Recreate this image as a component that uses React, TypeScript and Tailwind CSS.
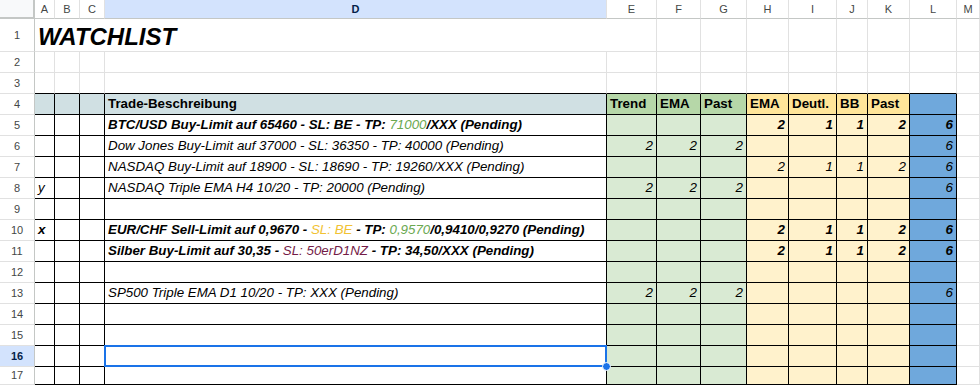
import type { ReactNode } from 'react'

const letters = ['A', 'B', 'C', 'D', 'E', 'F', 'G', 'H', 'I', 'J', 'K', 'L', 'M']

type Part = { t: string; c?: 'green' | 'orange' | 'maroon'; normal?: boolean }

type Row = {
  a?: string
  aBold?: boolean
  d?: Part[]
  bold?: boolean
  green?: (number | null)[]
  yellow?: (number | null)[]
  total?: number | null
}

// rows 5..17
const rows: Row[] = [
  {
    d: [
      { t: 'BTC/USD Buy-Limit auf 65460 - SL: BE - TP: ' },
      { t: '71000', c: 'green', normal: true },
      { t: '/XXX (Pending)' },
    ],
    bold: true,
    yellow: [2, 1, 1, 2],
    total: 6,
  },
  { d: [{ t: 'Dow Jones Buy-Limit auf 37000 - SL: 36350 - TP: 40000 (Pending)' }], green: [2, 2, 2], total: 6 },
  { d: [{ t: 'NASDAQ Buy-Limit auf 18900 - SL: 18690 - TP: 19260/XXX (Pending)' }], yellow: [2, 1, 1, 2], total: 6 },
  { a: 'y', d: [{ t: 'NASDAQ Triple EMA H4 10/20 - TP: 20000 (Pending)' }], green: [2, 2, 2], total: 6 },
  {},
  {
    a: 'x',
    aBold: true,
    d: [
      { t: 'EUR/CHF Sell-Limit auf 0,9670 - ' },
      { t: 'SL: BE', c: 'orange', normal: true },
      { t: ' - TP: ' },
      { t: '0,9570', c: 'green', normal: true },
      { t: '/0,9410/0,9270 (Pending)' },
    ],
    bold: true,
    yellow: [2, 1, 1, 2],
    total: 6,
  },
  {
    d: [
      { t: 'Silber Buy-Limit auf 30,35 - ' },
      { t: 'SL: 50erD1NZ', c: 'maroon', normal: true },
      { t: ' - TP: 34,50/XXX (Pending)' },
    ],
    bold: true,
    yellow: [2, 1, 1, 2],
    total: 6,
  },
  {},
  { d: [{ t: 'SP500 Triple EMA D1 10/20 - TP: XXX (Pending)' }], green: [2, 2, 2], total: 6 },
  {},
  {},
  {},
  {},
]

const partColor = {
  green: 'text-[#6aa84f]',
  orange: 'text-[#f1c232]',
  maroon: 'text-[#741b47]',
}

function Cell({ className = '', children }: { className?: string; children?: ReactNode }) {
  return <div className={`relative flex items-end overflow-hidden whitespace-nowrap border-r border-b ${className}`}>{children}</div>
}

function RowHead({ n, selected }: { n: number; selected?: boolean }) {
  return (
    <div
      className={`flex items-center justify-center border-r border-b border-r-[#c4c7c5] border-b-[#e1e1e1] text-[11px] ${
        selected ? 'bg-[#d3e3fd] font-bold text-[#041e49]' : 'bg-white text-[#444746]'
      }`}
    >
      {n}
    </div>
  )
}

function Num({ v, bold }: { v?: number | null; bold?: boolean }) {
  if (v == null) return null
  return <span className={`w-full pr-[3px] text-right italic ${bold ? 'font-bold' : ''}`}>{v}</span>
}

export default function App() {
  return (
    <div className="h-[385px] w-[980px] overflow-hidden bg-white font-['Liberation_Sans',Arial,sans-serif] text-[13.33px] text-black">
      <div className="grid grid-cols-[35px_20px_25px_25px_502px_50px_44px_46px_42px_48px_31px_42px_47px_1fr] grid-rows-[19px_33px_repeat(15,21px)]">
        {/* column headers */}
        <div className="border-r-2 border-b-2 border-[#c4c7c5] bg-[#f8f9fa]" />
        {letters.map((l) => (
          <div
            key={l}
            className={`flex items-center justify-center border-r border-b border-r-[#e1e1e1] border-b-[#c4c7c5] text-[11px] ${
              l === 'D' ? 'bg-[#d3e3fd] font-bold text-[#041e49]' : 'bg-white text-[#444746]'
            }`}
          >
            {l}
          </div>
        ))}

        {/* row 1 */}
        <RowHead n={1} />
        <Cell className="col-span-5 border-[#e1e1e1]">
          <span className="pl-[3px] text-[24px] leading-[28px] font-bold italic">WATCHLIST</span>
        </Cell>
        {letters.slice(5).map((l) => (
          <Cell key={l} className="border-[#e1e1e1]" />
        ))}

        {/* rows 2-3 */}
        {[2, 3].map((n) => (
          <div key={n} className="contents">
            <RowHead n={n} />
            {letters.map((l, i) => (
              <Cell
                key={l}
                className={`border-r-[#e1e1e1] ${n === 3 && i < 12 ? 'border-b-black' : 'border-b-[#e1e1e1]'}`}
              />
            ))}
          </div>
        ))}

        {/* row 4 header */}
        <RowHead n={4} />
        <Cell className="border-black bg-[#d0e0e3]" />
        <Cell className="border-black bg-[#d0e0e3]" />
        <Cell className="border-black bg-[#d0e0e3]" />
        <Cell className="border-black bg-[#d0e0e3] font-bold">
          <span className="pl-[3px]">Trade-Beschreibung</span>
        </Cell>
        {['Trend', 'EMA', 'Past'].map((h) => (
          <Cell key={h} className="border-black bg-[#b6d7a8] font-bold">
            <span className="pl-[3px]">{h}</span>
          </Cell>
        ))}
        {['EMA', 'Deutl.', 'BB', 'Past'].map((h, i) => (
          <Cell key={h + i} className="border-black bg-[#ffe599] font-bold">
            <span className="pl-[3px]">{h}</span>
          </Cell>
        ))}
        <Cell className="border-black bg-[#6fa8dc]" />
        <Cell className="border-[#e1e1e1]" />

        {/* data rows */}
        {rows.map((r, idx) => {
          const n = idx + 5
          const sel = n === 16
          return (
            <div key={n} className="contents">
              <RowHead n={n} selected={sel} />
              <Cell className="border-black">
                {r.a && <span className={`pl-[3px] italic ${r.aBold ? 'font-bold' : ''}`}>{r.a}</span>}
              </Cell>
              <Cell className="border-black" />
              <Cell className="border-black" />
              <Cell className="overflow-visible border-black">
                {r.d && (
                  <span className={`pl-[3px] italic ${r.bold ? 'font-bold' : ''}`}>
                    {r.d.map((p, i) => (
                      <span key={i} className={`${p.c ? partColor[p.c] : ''} ${p.normal ? 'font-normal' : ''}`}>
                        {p.t}
                      </span>
                    ))}
                  </span>
                )}
                {sel && (
                  <>
                    <div className="absolute inset-[-1px] border-2 border-[#1a73e8]" />
                    <div className="absolute right-[-5px] bottom-[-5px] z-10 h-[9px] w-[9px] rounded-full border border-white bg-[#1a73e8]" />
                  </>
                )}
              </Cell>
              {[0, 1, 2].map((i) => (
                <Cell key={'g' + i} className="border-black bg-[#d9ead3]">
                  <Num v={r.green?.[i]} bold={r.bold} />
                </Cell>
              ))}
              {[0, 1, 2, 3].map((i) => (
                <Cell key={'y' + i} className="border-black bg-[#fff2cc]">
                  <Num v={r.yellow?.[i]} bold={r.bold} />
                </Cell>
              ))}
              <Cell className="border-black bg-[#6fa8dc]">
                <Num v={r.total} bold={r.bold} />
              </Cell>
              <Cell className="border-[#e1e1e1]" />
            </div>
          )
        })}
      </div>
    </div>
  )
}
